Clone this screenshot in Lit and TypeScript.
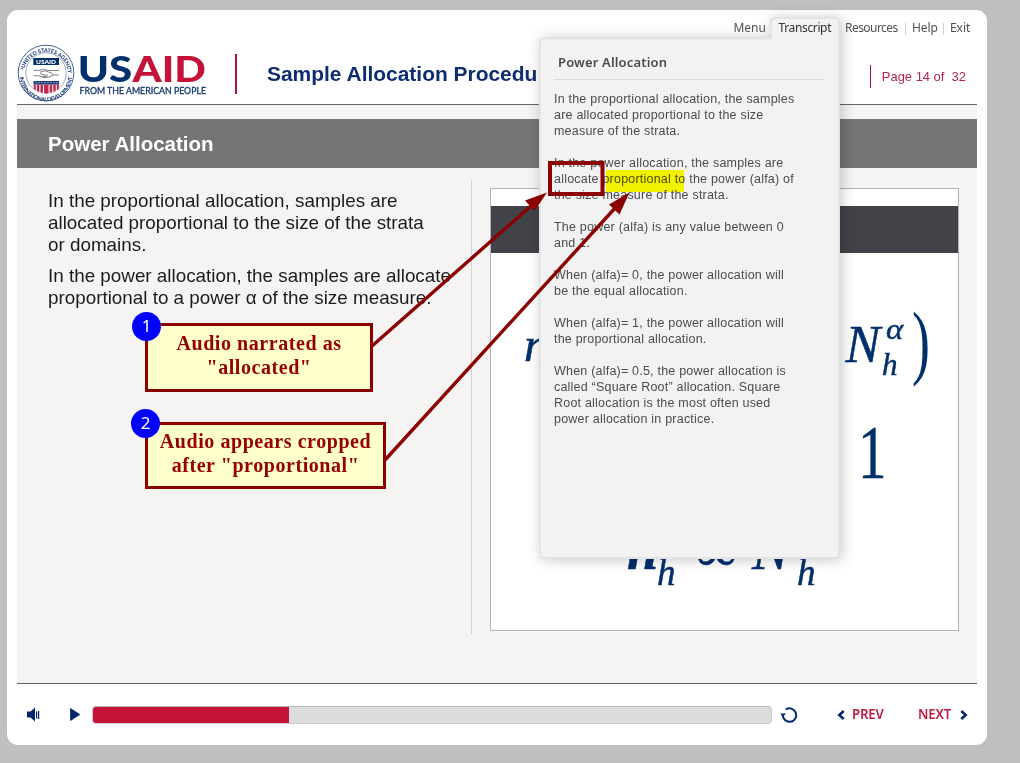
import { LitElement, html, css } from "lit";
import { customElement } from "lit/decorators.js";

@customElement("usaid-logo")
class UsaidLogo extends LitElement {
  static styles = css`
    :host { display: block; width: 196px; height: 64px; }
    svg { display: block; overflow: visible; }
    .word { font-family: Lato, sans-serif; font-weight: 900; font-size: 36.500px; }
    .tag { font-family: Lato, sans-serif; font-size: 9.300px; font-weight: 400; fill: #17396f; stroke: #17396f; stroke-width: 0.3; }
    .ring { font-family: Lato, sans-serif; font-weight: 900; font-size: 5.400px; fill: #26447c; }
    .mini { font-family: Lato, sans-serif; font-weight: 900; font-size: 6.200px; fill: #fff; }
  `;
  render() {
    return html`<svg width="196" height="64" viewBox="17 43 196 64">
      <defs>
        <path id="top" d="M23.9 76.5A22.2 22.2 0 1 1 68.1 76.5" />
        <path id="bottom" d="M19.7 75A26.3 26.3 0 0 0 72.3 75" />
      </defs>
      <circle cx="46" cy="73" r="27.8" fill="#fff" stroke="#45618f" stroke-width="1" />
      <circle cx="46" cy="73" r="20.2" fill="#fff" stroke="#7186a8" stroke-width="0.7" />
      <text class="ring"><textPath href="#top" startOffset="8" textLength="62">UNITED STATES AGENCY</textPath></text>
      <text class="ring"><textPath href="#bottom" startOffset="2" textLength="78">INTERNATIONAL DEVELOPMENT</textPath></text>
      <circle cx="22.2" cy="68.5" r="0.8" fill="#26447c" />
      <circle cx="70.4" cy="68.5" r="0.8" fill="#26447c" />
      <rect x="33.3" y="58" width="25.7" height="7" fill="#002f6c" />
      <text class="mini" x="36" y="63.7" textLength="20" lengthAdjust="spacingAndGlyphs">USAID</text>
      <path d="M33.500 70.300h6l4-1 5 1.200h10.500M33.500 75.800h5.500l5 2 6-1 3-1.800h6M40 72.200l5-1.400 6.500 2.200 2 2M40 73.600l4 1.400 4 .2M42 76.200l5 .6" fill="none" stroke="#747474" stroke-width="0.9" />
      <path d="M33.500 81h25.500v3.600H33.500z" fill="#1c3b77" />
      <path d="M35.500 82.700h22" stroke="#fff" stroke-width="0.9" stroke-dasharray="1 2" />
      <path d="M33.700 84.800h25.200v2.600c0 3.400-6.200 4.500-12.600 6-6.400-1.500-12.600-2.600-12.600-6z" fill="#c2254c" />
      <path d="M36.300 85v6M39.900 85v7.500M43.500 85v8M49.100 85v8M52.700 85v7.500M56.300 85v6" stroke="#fff" stroke-width="1.100" />
      <text class="word" x="77.700" y="81.600" fill="#002f6c" textLength="54.500" lengthAdjust="spacingAndGlyphs">US</text>
      <text class="word" x="132.500" y="81.600" fill="#c41239" textLength="73.500" lengthAdjust="spacingAndGlyphs">AID</text>
      <text class="tag" x="79.500" y="94" textLength="126.500" lengthAdjust="spacingAndGlyphs">FROM THE AMERICAN PEOPLE</text>
    </svg>`;
  }
}

@customElement("formula-figure")
class FormulaFigure extends LitElement {
  static styles = css`
    :host { display: block; box-sizing: border-box; width: 469px; height: 443px; background: #fff; border: 1px solid #b3b3b3; padding-top: 17px; }
    .band { height: 47px; background: #424249; }
    svg { display: block; }
    text { font-family: "Liberation Serif", serif; font-style: italic; fill: #002f6c; stroke: #002f6c; stroke-width: 0.500; }
    .up { font-style: normal; }
    .thin { stroke: none; }
  `;
  render() {
    return html`<div class="band"></div>
      <svg width="467" height="377" viewBox="491 253 467 377">
        <text x="524" y="361" font-size="49">n</text>
        <text x="845.500" y="362" font-size="52">N</text>
        <text x="886" y="339" font-size="33" transform="translate(0 33.900) scale(1 .9)">α</text>
        <text x="882" y="374.500" font-size="31">h</text>
        <text class="up thin" font-size="83" transform="translate(912 368.5) scale(.65 1)">)</text>
        <text class="up" font-size="77" transform="translate(858 477.5) scale(.74 1)" stroke-width="2.400">1</text>
        <text x="627" y="569" font-size="56" font-weight="bold">n</text>
        <text x="657" y="585" font-size="37">h</text>
        <text class="up" x="695" y="571" font-size="60">∞</text>
        <text x="752" y="569" font-size="56">N</text>
        <text x="797" y="585" font-size="37">h</text>
      </svg>`;
  }
}

@customElement("transcript-panel")
class TranscriptPanel extends LitElement {
  static styles = css`
    :host { display: block; position: relative; width: 301px; height: 542px; }
    .shape { position: absolute; inset: 0; overflow: visible; filter: drop-shadow(2px 1px 7px rgba(0, 0, 0, 0.22)); }
    .body { position: relative; padding: 37px 16px 0 15px; color: #4c4c4c; font: 12.500px/16px "Liberation Sans", sans-serif; letter-spacing: 0.210px; white-space: nowrap; }
    h2 { margin: 0 0 11px; padding: 0 0 8px 4px; border-bottom: 1px solid #dadada; font: 600 13px/17px "Noto Sans", sans-serif; letter-spacing: 0.150px; color: #4a4a4a; }
    p { margin: 0 0 16px; }
  `;
  render() {
    return html`
      <svg class="shape" width="301" height="542">
        <path d="M4 21.500H232V4.500Q232 1 235.500 1H296.500Q300 1 300 4.500V537.500Q300 541 296.500 541H4.500Q1 541 1 537.500V25Q1 21.500 4 21.500Z" fill="#f2f2f2" stroke="#e4e4e4" stroke-width="2" />
      </svg>
      <div class="body">
        <h2>Power Allocation</h2>
        <p>In the proportional allocation, the samples<br />are allocated proportional to the size<br />measure of the strata.</p>
        <p>In the power allocation, the samples are<br />allocate proportional to the power (alfa) of<br />the size measure of the strata.</p>
        <p>The power (alfa) is any value between 0<br />and 1.</p>
        <p>When (alfa)= 0, the power allocation will<br />be the equal allocation.</p>
        <p>When (alfa)= 1, the power allocation will<br />the proportional allocation.</p>
        <p>When (alfa)= 0.5, the power allocation is<br />called “Square Root” allocation. Square<br />Root allocation is the most often used<br />power allocation in practice.</p>
      </div>`;
  }
}

@customElement("app-root")
class AppRoot extends LitElement {
  static styles = css`
    :host { display: block; position: relative; box-sizing: border-box; width: 1020px; height: 763px; padding: 10px 0 0 7px; overflow: hidden; background: #bfbfbf; font-family: "Liberation Sans", sans-serif; }
    .player { display: flex; flex-direction: column; box-sizing: border-box; width: 980px; height: 735px; padding: 0 10px; border-radius: 11px; background: #fff; }
    .header { display: flex; align-items: flex-start; box-sizing: border-box; height: 95px; border-bottom: 1px solid #666; }
    usaid-logo { flex: none; margin-top: 33px; }
    .rule { width: 2px; height: 40px; margin: 44px 0 0 22px; background: #a8163a; }
    h1 { flex: 1; margin: 52px 0 0 30px; font-size: 20.950px; line-height: 24px; color: #0e2d6c; white-space: nowrap; }
    .right { display: flex; flex-direction: column; align-items: flex-end; }
    .nav { position: relative; z-index: 2; display: flex; margin: 10px 6px 0 0; font: 12px/16px "Noto Sans", sans-serif; color: #505050; }
    .nav span { white-space: nowrap; letter-spacing: -0.050px; }
    .menu { width: 45px; }
    .nav .transcript { width: 66.500px; color: #333; letter-spacing: -0.360px; }
    .nav .resources { width: 67px; letter-spacing: -0.550px; }
    .help { width: 38px; }
    .exit { width: 21px; }
    .sep { box-sizing: border-box; width: 1px; height: 12px; margin: 3px 0 0 -7px; background: #cfcfcf; }
    .sep + span { margin-left: 6px; }
    .page { margin: 29px 11px 0 0; padding-left: 11px; border-left: 1px solid #a8163a; font-size: 12.950px; line-height: 23px; color: #b5254b; white-space: pre; }
    .stage { flex: none; box-sizing: border-box; height: 579px; padding-top: 14px; background: #f5f4f3; border-bottom: 1px solid #666; }
    .title { box-sizing: border-box; height: 49px; margin: 0; padding-left: 31px; background: #757575; color: #fff; font-size: 20.500px; line-height: 50px; }
    .content { display: flex; }
    .copy { box-sizing: border-box; width: 455px; height: 454px; margin-top: 12px; padding: 10px 0 0 31px; border-right: 1px solid #d4d4d4; font-size: 18.830px; line-height: 22px; color: #1c1c1c; white-space: nowrap; }
    .copy p { margin: 0 0 9px; }
    formula-figure { margin: 20px 0 0 18px; }
    .controls { display: flex; align-items: center; height: 61px; padding-left: 9px; color: #bd1c42; }
    .controls svg { display: block; flex: none; }
    .play { margin-left: 28px; }
    .track { box-sizing: border-box; width: 680px; height: 18px; margin: 0 8px 0 11px; border: 1px solid #cdcdcd; border-top-color: #b5b5b5; border-radius: 4px; background: #dcdcdc; overflow: hidden; }
    .fill { height: 100%; background: #c41239; }
    .prev { margin: -2px 33px 0 7px; width: 33px; }
    .next { margin: -2px 6px 0 0; width: 35px; }
    .prev, .next { display: block; font: 600 14.200px/18px "Noto Sans", sans-serif; transform: scaleX(0.930); transform-origin: 0 50%; white-space: nowrap; letter-spacing: -0.150px; }
    .back { margin-left: 39px; }
    transcript-panel { position: absolute; left: 539px; top: 17px; }
    .overlay { position: absolute; inset: 0; z-index: 3; }
    .highlight { position: absolute; left: 606px; top: 170px; width: 78px; height: 22px; background: #ff0; mix-blend-mode: multiply; z-index: 2; }
    .note { position: absolute; box-sizing: border-box; left: 145px; border: 3px solid #8b0000; background: #ffc; color: #960000; text-align: center; font: bold 20px/24px "Liberation Serif", serif; letter-spacing: 0.560px; white-space: nowrap; }
    .first { top: 323px; width: 228px; height: 69px; padding-top: 5px; }
    .second { top: 422px; width: 241px; height: 67px; padding-top: 4px; }
    .badge { position: absolute; width: 29px; height: 29px; border-radius: 50%; background: #00f; color: #fff; font: 17px/28px "Noto Sans", sans-serif; letter-spacing: 0; }
    .first .badge { left: -16px; top: -14px; }
    .second .badge { left: -17px; top: -16px; }
    .arrows { position: absolute; inset: 0; }
  `;
  render() {
    const progress = 28.9;
    return html`
      <div class="player">
        <div class="header">
          <usaid-logo></usaid-logo>
          <div class="rule"></div>
          <h1>Sample Allocation Procedu</h1>
          <div class="right">
            <div class="nav">
              <span class="menu">Menu</span><span class="transcript">Transcript</span>
              <span class="resources">Resources</span><i class="sep"></i>
              <span class="help">Help</span><i class="sep"></i><span class="exit">Exit</span>
            </div>
            <div class="page">Page 14 of  32</div>
          </div>
        </div>
        <div class="stage">
          <h2 class="title">Power Allocation</h2>
          <div class="content">
            <div class="copy">
              <p>In the proportional allocation, samples are<br />allocated proportional to the size of the strata<br />or domains.</p>
              <p>In the power allocation, the samples are allocate<br />proportional to a power α of the size measure.</p>
            </div>
            <formula-figure></formula-figure>
          </div>
        </div>
        <div class="controls">
          <svg width="16" height="16" viewBox="26 706 16 16" fill="#002868"><path d="M27 710.500h3.500l4.500-4v14l-4.500-4H27zM36 710.500h1.200v7H36zM38 710h1.200v8H38z" /></svg>
          <svg class="play" width="11" height="13"><path d="M.5 .5L9.800 6.500 .5 12.500z" fill="#002868" stroke="#002868" stroke-width=".8" stroke-linejoin="round" /></svg>
          <div class="track"><div class="fill" style="width:${progress}%"></div></div>
          <svg width="18" height="18" fill="none" stroke="#002868"><path d="M2.800 9.500A6.700 6.700 0 1 0 5 4" stroke-width="2" transform="rotate(8 9 9)" /><path d="M.2 7.400h6L2.800 10.900z" fill="#002868" stroke="none" /></svg>
          <svg class="back" width="8" height="10" fill="none" stroke="#002868" stroke-width="2.600"><path d="M6.700 1L2.300 5l4.400 4" /></svg>
          <span class="prev">PREV</span>
          <span class="next">NEXT</span>
          <svg width="9" height="10" fill="none" stroke="#002868" stroke-width="2.600"><path d="M2.300 1l4.400 4-4.400 4" /></svg>
        </div>
      </div>
      <transcript-panel></transcript-panel>
      <div class="highlight"></div>
      <div class="overlay">
        <div class="note first"><span class="badge">1</span>Audio narrated as<br />"allocated"</div>
        <div class="note second"><span class="badge">2</span>Audio appears cropped<br />after "proportional"</div>
        <svg class="arrows" width="1020" height="763">
          <rect x="550" y="163" width="52.500" height="31" fill="none" stroke="#8b0000" stroke-width="4" />
          <g stroke="#8b0000" stroke-width="3.400"><path d="M372 346L532 205M385 460L616 207" /></g>
          <path d="M547 192.500L525 200.500 534.500 211zM629.500 192.500L609 204.500 619.500 214.500z" fill="#8b0000" />
        </svg>
      </div>`;
  }
}
